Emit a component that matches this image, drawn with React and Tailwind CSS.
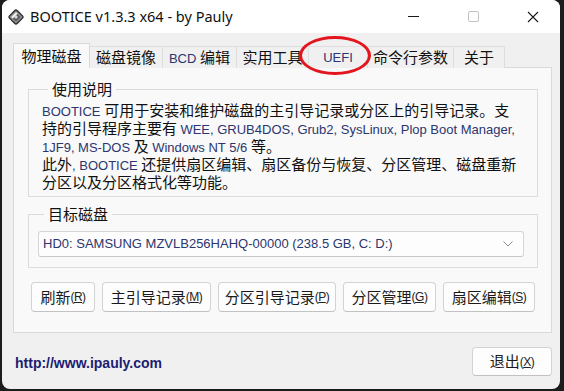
import React from "react";

const L = ({ children }) => (
  <span className="font-['Liberation_Sans',sans-serif] text-[13px] leading-[18px] text-[#2b3670]">{children}</span>
);

const Mn = ({ k }) => (
  <span className="font-['Liberation_Sans',sans-serif] text-[12px] tracking-[-0.5px] text-[#222]">
    (<span className="underline">{k}</span>)
  </span>
);

const Btn = ({ w, label, k }) => (
  <div
    className={`${w} h-[30px] flex items-center justify-center bg-[#fdfdfd] border border-[#d3d3d3] border-b-[#c2c2c2] rounded-[4px] text-[15px] text-[#1a1a1a]`}
  >
    <span>{label}</span>
    <Mn k={k} />
  </div>
);

const tabs = [
  { t: "物理磁盘", w: "w-[77px]", sel: true },
  { t: "磁盘镜像", w: "w-[73px]" },
  { t: "BCD 编辑", w: "w-[74px]" },
  { t: "实用工具", w: "w-[72px]" },
  { t: "UEFI", w: "w-[59px]" },
  { t: "命令行参数", w: "w-[86px]" },
  { t: "关于", w: "w-[51px]" },
];

const Line = ({ children }) => <div className="h-[18px] leading-[18px]">{children}</div>;

export default function App() {
  return (
    <div className="w-[564px] h-[391px] bg-[#1c1c1c] pl-[2px] pr-[4px] pb-[2px] overflow-hidden font-['Noto_Sans_CJK_SC',sans-serif]">
      <div className="relative w-[558px] h-[389px] bg-[#f0f0f0] rounded-[8px] overflow-hidden flex flex-col">
        {/* Title bar */}
        <div className="h-[33px] bg-white flex items-center shrink-0">
          <div className="ml-[6px] w-[16px] h-[16px]">
            <svg width="16" height="16" viewBox="0 0 16 16">
              <rect x="2.6" y="2.6" width="10.8" height="10.8" rx="1.6" transform="rotate(45 8 8)" fill="#8c8c8c" stroke="#262626" strokeWidth="1.2" />
              <rect x="4.8" y="4.8" width="6.4" height="6.4" rx="0.8" transform="rotate(45 8 8)" fill="#5a5a5a" />
              <path d="M3.2 8 L8 3.2 L9.6 4.8 L4.8 9.6 Z" fill="#f2f2f2" />
              <rect x="6.6" y="6.6" width="2.8" height="2.8" transform="rotate(45 8 8)" fill="#d9d9d9" />
            </svg>
          </div>
          <div className="ml-[6px] font-['Noto_Sans',sans-serif] text-[14.5px] text-[#111]">
            BOOTICE v1.3.3 x64 - by Pauly
          </div>
          <div className="ml-auto flex items-center gap-[46px] pr-[20px]">
            <div className="w-[14px] h-[14px] flex items-center justify-center">
              <div className="w-[11px] h-[1px] bg-[#1a1a1a]" />
            </div>
            <div className="w-[14px] h-[14px] flex items-center justify-center">
              <div className="w-[11px] h-[11px] border border-[#c2c2c2] rounded-[2px]" />
            </div>
            <div className="w-[14px] h-[14px] flex items-center justify-center">
              <svg width="12" height="12" viewBox="0 0 12 12">
                <path d="M1 1 L11 11 M11 1 L1 11" stroke="#1a1a1a" strokeWidth="1.1" />
              </svg>
            </div>
          </div>
        </div>

        {/* Body */}
        <div className="flex-1 flex flex-col pl-[11px] pr-[8px] pt-[10px]">
          {/* Tabs */}
          <div className="flex items-end h-[25px] -mb-px relative z-10">
            {tabs.map((tab) =>
              tab.sel ? (
                <div
                  key={tab.t}
                  className={`${tab.w} h-[25px] bg-[#f9f9f9] border border-[#d9d9d9] border-b-0 flex items-center justify-center text-[15px] text-[#111]`}
                >
                  {tab.t}
                </div>
              ) : (
                <div
                  key={tab.t}
                  className={`${tab.w} h-[22px] bg-[#f0f0f0] border-t border-r border-[#dedede] flex items-center justify-center text-[15px] text-[#111]`}
                >
                  {tab.t === "UEFI" ? (
                    <span className="font-['Liberation_Sans',sans-serif] text-[13px] text-[#2b3670]">UEFI</span>
                  ) : tab.t === "BCD 编辑" ? (
                    <span>
                      <L>BCD </L>编辑
                    </span>
                  ) : (
                    tab.t
                  )}
                </div>
              )
            )}
          </div>

          {/* Panel */}
          <div className="h-[266px] bg-[#f9f9f9] border border-[#d9d9d9] flex flex-col px-[14px] pt-[11px] shrink-0">
            <fieldset className="border border-[#dcdcdc] mr-[-1px] px-[13px] pb-[5px]">
              <legend className="ml-[6px] px-[4px] text-[15px] leading-[20px] text-[#111]">使用说明</legend>
              <div className="text-[15px] leading-[18px] text-[#111] whitespace-nowrap pt-[2px]">
                <Line>
                  <L>BOOTICE </L>可用于安装和维护磁盘的主引导记录或分区上的引导记录。支
                </Line>
                <Line>
                  持的引导程序主要有 <L>WEE, GRUB4DOS, Grub2, SysLinux, Plop Boot Manager,</L>
                </Line>
                <Line>
                  <L>1JF9, MS-DOS </L>及 <L>Windows NT 5/6 </L>等。
                </Line>
                <Line>
                  此外<L>, BOOTICE </L>还提供扇区编辑、扇区备份与恢复、分区管理、磁盘重新
                </Line>
                <Line>分区以及分区格式化等功能。</Line>
              </div>
            </fieldset>

            <fieldset className="mt-[7px] border border-[#dcdcdc] mr-[-1px] pl-[9px] pr-[13px] pt-[7px] pb-[10px]">
              <legend className="ml-[6px] px-[4px] text-[15px] leading-[20px] text-[#111]">目标磁盘</legend>
              <div className="h-[26px] bg-[#fdfdfd] border border-[#d6d6d6] border-b-[#c8c8c8] rounded-[3px] flex items-center pl-[4px] pr-[10px]">
                <L>HD0: SAMSUNG MZVLB256HAHQ-00000 (238.5 GB, C: D:)</L>
                <svg className="ml-auto" width="10" height="6" viewBox="0 0 10 6">
                  <path d="M0.5 0.5 L5 5 L9.5 0.5" fill="none" stroke="#8a8a8a" strokeWidth="1" />
                </svg>
              </div>
            </fieldset>

            <div className="mt-[14px] ml-[3px] flex gap-[7px]">
              <Btn w="w-[64px]" label="刷新" k="R" />
              <Btn w="w-[109px]" label="主引导记录" k="M" />
              <Btn w="w-[118px]" label="分区引导记录" k="P" />
              <Btn w="w-[93px]" label="分区管理" k="G" />
              <Btn w="w-[92px]" label="扇区编辑" k="S" />
            </div>
          </div>

          {/* Footer */}
          <div className="flex items-start pt-[14px]">
            <div className="ml-[2px] mt-[6px] font-['Liberation_Sans',sans-serif] font-bold text-[14px] text-[#1d1d72]">
              http://www.ipauly.com
            </div>
            <div className="ml-auto w-[80px] h-[29px] flex items-center justify-center bg-[#fdfdfd] border border-[#d3d3d3] border-b-[#c2c2c2] rounded-[4px] text-[15px] text-[#1a1a1a]">
              <span>退出</span>
              <Mn k="X" />
            </div>
          </div>
        </div>

        {/* Red annotation ellipse */}
        <div className="absolute left-[297px] top-[36px] w-[72px] h-[39px] rounded-[50%] border-[3px] border-[#e3161f] z-20" />
      </div>
    </div>
  );
}
